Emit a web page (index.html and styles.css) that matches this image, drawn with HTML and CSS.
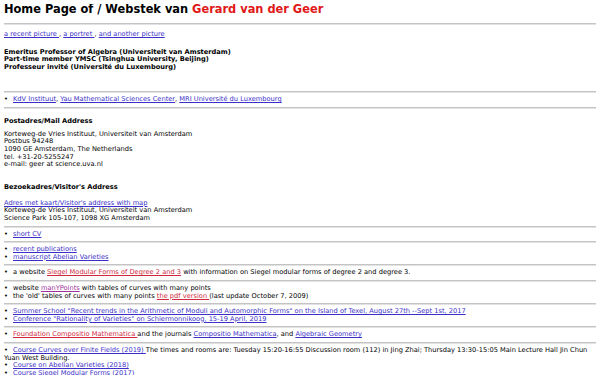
FILE: index.html
```
<!DOCTYPE html>
<html lang="en">
<head>
  <meta charset="UTF-8" />
  <title>Home Page of Gerard van der Geer</title>
  <link rel="stylesheet" href="styles.css">
</head>
<body>
  <h1 class="title">Home Page of / Webstek van <span class="name">Gerard van der Geer</span></h1>
  <hr>
  <p class="pics"><a href="#">a recent picture </a>, <a href="#">a portret </a>, <a href="#">and another picture</a></p>

  <p class="roles">
    Emeritus Professor of Algebra (Universiteit van Amsterdam)<br>
    Part-time member YMSC (Tsinghua University, Beijing)<br>
    Professeur invité (Université du Luxembourg)
  </p>

  <hr class="gap">
  <p class="row"><span class="dot">•</span><a href="#">KdV Instituut</a>, <a href="#">Yau Mathematical Sciences Center</a>, <a href="#">MRI Université du Luxembourg </a></p>
  <hr>

  <h4 class="head">Postadres/Mail Address</h4>
  <p class="addr">
    Korteweg-de Vries Instituut, Universiteit van Amsterdam<br>
    Postbus 94248<br>
    1090 GE Amsterdam, The Netherlands<br>
    tel. +31-20-5255247<br>
    e-mail: geer at science.uva.nl
  </p>

  <h4 class="head visit">Bezoekadres/Visitor's Address</h4>
  <p class="addr">
    <a href="#">Adres met kaart/Visitor's address with map</a><br>
    Korteweg-de Vries Instituut, Universiteit van Amsterdam<br>
    Science Park 105-107, 1098 XG Amsterdam
  </p>

  <hr>
  <p class="row"><span class="dot">•</span><a href="#">short CV</a></p>
  <hr>
  <p class="row"><span class="dot">•</span><a href="#">recent publications</a><br>
    <span class="dot">•</span><a href="#">manuscript Abelian Varieties</a></p>
  <hr>
  <p class="row"><span class="dot">•</span>a website <a class="red" href="#">Siegel Modular Forms of Degree 2 and 3</a> with information on Siegel modular forms of degree 2 and degree 3.</p>
  <hr>
  <p class="row"><span class="dot">•</span>website <a class="purple" href="#">manYPoints</a> with tables of curves with many points<br>
    <span class="dot">•</span>the 'old' tables of curves with many points <a class="red" href="#">the pdf version </a>(last update October 7, 2009)</p>
  <hr>
  <p class="row"><span class="dot">•</span><a href="#">Summer School "Recent trends in the Arithmetic of Moduli and Automorphic Forms" on the Island of Texel, August 27th --Sept 1st, 2017</a><br>
    <span class="dot">•</span><a href="#">Conference "Rationality of Varieties" on Schiermonnikoog, 15-19 April, 2019</a></p>
  <hr>
  <p class="row"><span class="dot">•</span><a class="red" href="#">Foundation Compositio Mathematica </a>and the journals <a href="#">Compositio Mathematica</a>, and <a href="#">Algebraic Geometry</a></p>
  <hr>
  <p class="row"><span class="dot">•</span><a href="#">Course Curves over Finite Fields (2019) </a>The times and rooms are: Tuesday 15:20-16:55 Discussion room (112) in Jing Zhai; Thursday 13:30-15:05 Main Lecture Hall Jin Chun Yuan West Building.<br>
    <span class="dot">•</span><a href="#">Course on Abelian Varieties (2018)</a><br>
    <span class="dot">•</span><a href="#">Course Siegel Modular Forms (2017)</a></p>
</body>
</html>
```

FILE: styles.css
```
body {
  margin: 4px;
  font-family: "DejaVu Sans", sans-serif;
  font-size: 6.66px;
  line-height: 7.6px;
  color: #000;
  background: #fff;
}
a {
  color: #3a2fc8;
}
a.red {
  color: #d0283c;
}
a.purple {
  color: #a0309a;
}
.title {
  margin: 0;
  font-size: 11.4px;
  line-height: 11px;
  font-weight: bold;
}
.title .name {
  color: #e01818;
}
hr {
  height: 0;
  margin: 3px 0;
  border: 0;
  border-top: 1px solid #c4c4c4;
  border-bottom: 1px solid #e2e2e2;
}
.title + hr {
  margin-top: 8px;
}
.pics {
  margin: 6.25px 0 10px;
}
.roles {
  margin: 0;
  font-weight: bold;
}
hr.gap {
  margin-top: 19.5px;
}
.row {
  margin: 0;
}
.dot {
  display: inline-block;
  width: 9px;
}
.head {
  margin: 9px 0 5.5px;
  font-size: 6.66px;
  font-weight: bold;
}
.head.visit {
  margin-top: 15px;
  margin-bottom: 8.5px;
}
.addr {
  margin: 0;
}
.addr + hr {
  margin-top: 3px;
}
```
